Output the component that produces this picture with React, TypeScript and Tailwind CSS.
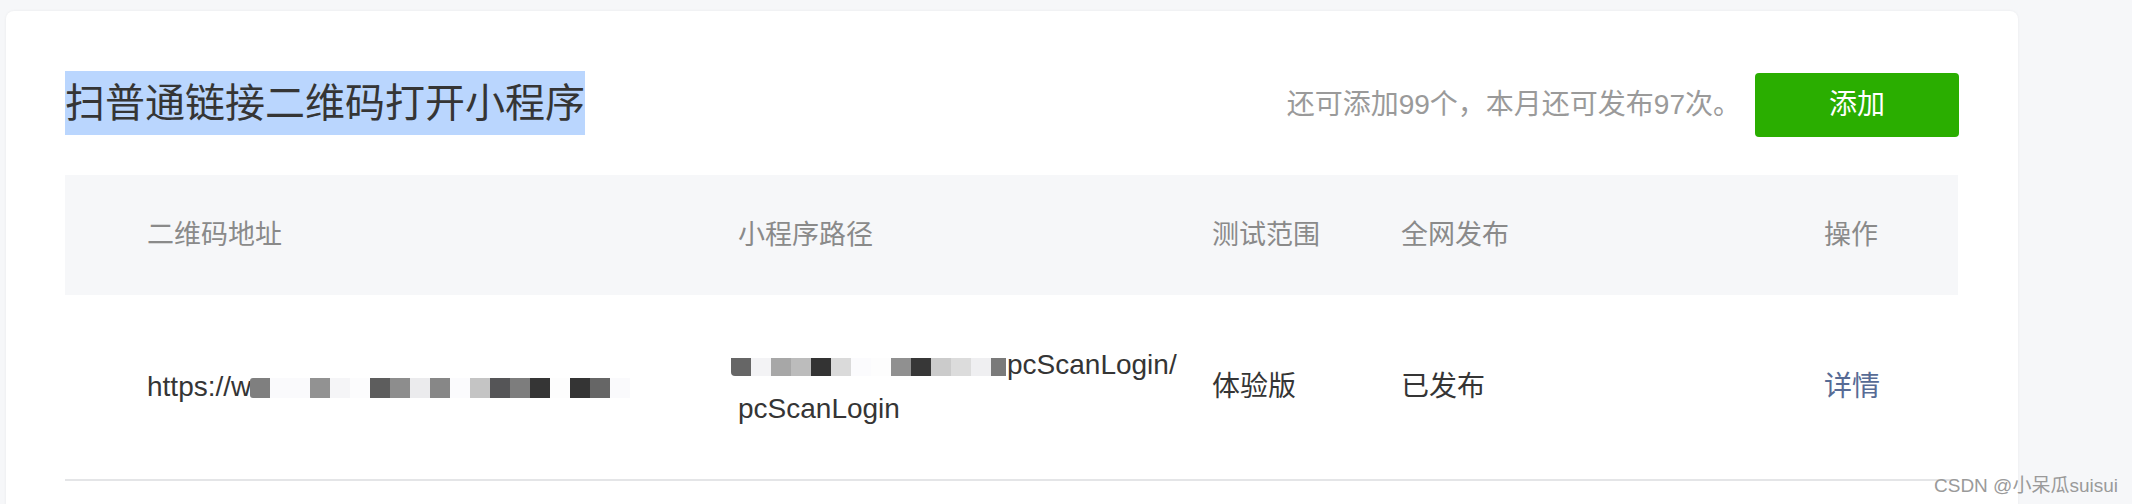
import React from 'react';

const urlBlocks = [
  ['w-[20px]', 'bg-[#7f7f7f] rounded-l-[3px]'],
  ['w-[40px]', 'bg-[#fafafc]'],
  ['w-[20px]', 'bg-[#929292]'],
  ['w-[20px]', 'bg-[#f5f5f7]'],
  ['w-[20px]', 'bg-[#fcfcfd]'],
  ['w-[20px]', 'bg-[#5d5d5d]'],
  ['w-[20px]', 'bg-[#8d8d8d]'],
  ['w-[20px]', 'bg-[#ebebed]'],
  ['w-[20px]', 'bg-[#878787]'],
  ['w-[20px]', 'bg-[#fbfbfd]'],
  ['w-[20px]', 'bg-[#c4c4c4]'],
  ['w-[20px]', 'bg-[#555557]'],
  ['w-[20px]', 'bg-[#7d7d7d]'],
  ['w-[20px]', 'bg-[#353535]'],
  ['w-[20px]', 'bg-[#fdfdfd]'],
  ['w-[20px]', 'bg-[#343434]'],
  ['w-[20px]', 'bg-[#666666]'],
  ['w-[20px]', 'bg-[#fafafc]'],
];

const pathBlocks = [
  ['w-[20px]', 'bg-[#666666] rounded-bl-[4px]'],
  ['w-[20px]', 'bg-[#f3f3f5]'],
  ['w-[20px]', 'bg-[#a7a7a7]'],
  ['w-[20px]', 'bg-[#bcbcbc]'],
  ['w-[20px]', 'bg-[#333333]'],
  ['w-[20px]', 'bg-[#dadada]'],
  ['w-[20px]', 'bg-[#fbfbfd]'],
  ['w-[20px]', 'bg-[#fdfdfd]'],
  ['w-[20px]', 'bg-[#909090]'],
  ['w-[20px]', 'bg-[#373737]'],
  ['w-[20px]', 'bg-[#cbcbcb]'],
  ['w-[20px]', 'bg-[#dcdcdc]'],
  ['w-[20px]', 'bg-[#efeff1]'],
  ['w-[15px]', 'bg-[#7a7a7a]'],
];

const font = 'font-["Liberation_Sans","Noto_Sans_CJK_SC",sans-serif]';

export default function App() {
  return (
    <div className={`relative h-[504px] w-full overflow-hidden bg-[#f6f7f9] pt-[11px] pl-[6px] ${font}`}>
      <div className="h-[600px] w-[2012px] rounded-t-[8px] bg-white px-[59px] pt-[60px] shadow-[0_0_3px_rgba(0,0,0,0.06)]">
        {/* title row */}
        <div className="flex h-[66px] items-start justify-between">
          <h2 className="bg-[#bad6fe] text-[40px] leading-[64px] font-normal text-[#353535]">扫普通链接二维码打开小程序</h2>
          <div className="mt-[2px] flex items-center gap-[14px]">
            <span className="text-[28px] text-[#9a9a9a]">还可添加99个，本月还可发布97次。</span>
            <button className="h-[64px] w-[204px] rounded-[4px] bg-[#2aae00] text-[28px] text-white">添加</button>
          </div>
        </div>

        {/* table */}
        <div className="mt-[38px] w-[1893px]">
          <div className="grid h-[120px] grid-cols-[591px_474px_189px_423px_1fr] items-center bg-[#f6f7f9] pl-[82px] text-[27px] text-[#8a8a8a]">
            <div>二维码地址</div>
            <div>小程序路径</div>
            <div>测试范围</div>
            <div>全网发布</div>
            <div>操作</div>
          </div>
          <div className="grid h-[186px] grid-cols-[591px_474px_189px_423px_1fr] items-center border-b-2 border-[#e4e5e7] pl-[82px] text-[28px] text-[#353535]">
            <div className="flex items-center">
              <span>https://w</span>
              <div className="ml-[-1px] mt-[2px] flex h-[20px]">
                {urlBlocks.map(([w, c], i) => (
                  <div key={i} className={`h-full ${w} ${c}`} />
                ))}
              </div>
            </div>
            <div className="leading-[44px]">
              <div className="flex items-center">
                <div className="ml-[-7px] mt-[4px] flex h-[18px]">
                  {pathBlocks.map(([w, c], i) => (
                    <div key={i} className={`h-full ${w} ${c}`} />
                  ))}
                </div>
                <span className="ml-[1px]">pcScanLogin/</span>
              </div>
              <div>pcScanLogin</div>
            </div>
            <div>体验版</div>
            <div>已发布</div>
            <div className="text-[#576b95]">详情</div>
          </div>
        </div>
      </div>

      {/* watermark */}
      <div className="absolute left-[1934px] top-[472px] text-[19px] text-[#9a9a9a]">CSDN @小呆瓜suisui</div>
    </div>
  );
}
